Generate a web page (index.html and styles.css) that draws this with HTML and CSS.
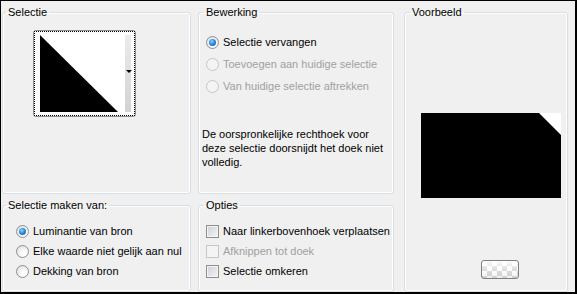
FILE: index.html
```html
<!DOCTYPE html>
<html lang="nl">
<head>
  <meta charset="UTF-8">
  <title>Selectie maken van masker</title>
  <link rel="stylesheet" href="styles.css">
</head>
<body>
  <div class="dialog">
    <fieldset class="group group-selectie">
      <legend>Selectie</legend>
      <div class="thumb">
        <div class="thumb-focus">
          <svg class="thumb-img" width="85" height="77" viewBox="0 0 85 77">
            <rect width="85" height="77" fill="#fff"/>
            <polygon points="0,0 0,77 78,77" fill="#000"/>
          </svg>
          <div class="thumb-strip"><span class="thumb-arrow"></span></div>
        </div>
      </div>
    </fieldset>

    <fieldset class="group group-bewerking">
      <legend>Bewerking</legend>
      <div class="options options-wide">
        <label class="opt"><span class="radio checked"></span>Selectie vervangen</label>
        <label class="opt disabled"><span class="radio"></span>Toevoegen aan huidige selectie</label>
        <label class="opt disabled"><span class="radio"></span>Van huidige selectie aftrekken</label>
      </div>
      <p class="note">De oorspronkelijke rechthoek voor deze selectie doorsnijdt het doek niet volledig.</p>
    </fieldset>

    <fieldset class="group group-voorbeeld">
      <legend>Voorbeeld</legend>
      <svg class="preview" width="140" height="85" viewBox="0 0 140 85">
        <rect width="140" height="85" fill="#000"/>
        <polygon points="118,0 140,0 140,22" fill="#fff"/>
      </svg>
      <button class="checker-btn" type="button" aria-label="Achtergrond"></button>
    </fieldset>

    <fieldset class="group group-bron">
      <legend>Selectie maken van:</legend>
      <div class="options options-tight">
        <label class="opt"><span class="radio checked"></span>Luminantie van bron</label>
        <label class="opt"><span class="radio"></span>Elke waarde niet gelijk aan nul</label>
        <label class="opt"><span class="radio"></span>Dekking van bron</label>
      </div>
    </fieldset>

    <fieldset class="group group-opties">
      <legend>Opties</legend>
      <div class="options options-tight">
        <label class="opt"><span class="check"></span>Naar linkerbovenhoek verplaatsen</label>
        <label class="opt disabled"><span class="check"></span>Afknippen tot doek</label>
        <label class="opt"><span class="check"></span>Selectie omkeren</label>
      </div>
    </fieldset>
  </div>
</body>
</html>
```

FILE: styles.css
```css
body {
  margin: 0;
  background: #f0f0f0;
  font-family: 'Liberation Sans', Arial, sans-serif;
  font-size: 11px;
  color: #000;
}

.dialog {
  width: 577px;
  height: 294px;
  box-sizing: border-box;
  border-style: solid;
  border-color: #000;
  border-width: 1px 2px 2px 1px;
  padding: 4px 0 0 1px;
  background: #f0f0f0;
  display: grid;
  grid-template-columns: 189px 196px 167px;
  grid-template-rows: 189px 94px;
  column-gap: 7px;
  row-gap: 4px;
}

.group {
  margin: 0;
  padding: 0;
  min-width: 0;
  border: 1px solid #d5dfe5;
  border-radius: 3px;
  box-shadow: inset 0 0 0 1px #fff;
}

.group legend {
  padding: 0 2px;
  margin-left: 5px;
  line-height: 14px;
}

.group-selectie legend,
.group-bron legend {
  margin-left: 3px;
}

.group-selectie { grid-column: 1; grid-row: 1; }
.group-bewerking { grid-column: 2; grid-row: 1; }
.group-voorbeeld { grid-column: 3; grid-row: 1 / 3; margin-left: 3px; }
.group-bron { grid-column: 1; grid-row: 2; }
.group-opties { grid-column: 2; grid-row: 2; }

/* selectie thumbnail */
.thumb {
  width: 103px;
  height: 87px;
  box-sizing: border-box;
  margin: 11px 0 0 30px;
  border: 1px solid #8d8d8d;
  border-radius: 3px;
  background: #fcfcfc;
}

.thumb-focus {
  height: 100%;
  box-sizing: border-box;
  border: 1px dotted #000;
  padding: 3px 0 0 5px;
  display: flex;
  align-items: flex-start;
}

.thumb-img {
  display: block;
}

.thumb-strip {
  width: 6px;
  height: 77px;
  background: linear-gradient(to bottom, #ececec, #d2d2d2);
  position: relative;
}

.thumb-arrow {
  position: absolute;
  left: 1px;
  top: 35px;
  width: 0;
  height: 0;
  border-left: 3px solid transparent;
  border-right: 3px solid transparent;
  border-top: 3px solid #000;
}

/* radio / check rows */
.options {
  display: flex;
  flex-direction: column;
}

.options-wide {
  margin: 12px 0 0 7px;
}

.options-wide .opt {
  height: 22px;
}

.options-tight {
  margin: 9px 0 0 7px;
}

.group-bron .options-tight {
  margin-left: 13px;
}

.options-tight .opt {
  height: 20px;
}

.opt {
  display: flex;
  align-items: center;
  gap: 4px;
  white-space: nowrap;
}

.opt.disabled {
  color: #a0a0a0;
}

.radio {
  width: 13px;
  height: 13px;
  box-sizing: border-box;
  border-radius: 50%;
  border: 1px solid #8e8f8f;
  background: radial-gradient(circle at 65% 70%, #fff 20%, #dcdcdc 90%);
  position: relative;
  flex: none;
}

.radio.checked::after {
  content: "";
  position: absolute;
  left: 2px;
  top: 2px;
  width: 7px;
  height: 7px;
  border-radius: 50%;
  background: radial-gradient(circle at 40% 35%, #8fd3ff 0, #2d8be0 45%, #0b4fa3 100%);
}

.disabled .radio {
  border-color: #c6c6c6;
  background: #f4f4f4;
}

.check {
  width: 13px;
  height: 13px;
  box-sizing: border-box;
  border: 1px solid #8e8f8f;
  background: linear-gradient(135deg, #cbcfd5, #f6f6f6);
  box-shadow: inset 0 0 0 1px #f4f4f4;
  flex: none;
}

.disabled .check {
  border-color: #c6c6c6;
  background: #f4f4f4;
  box-shadow: none;
}

.note {
  width: 188px;
  margin: 30px 0 0 3px;
  line-height: 14px;
}

/* voorbeeld */
.preview {
  display: block;
  margin: 94px 0 0 16px;
}

.checker-btn {
  display: block;
  width: 38px;
  height: 19px;
  margin: 62px 0 0 76px;
  padding: 0;
  border: 1px solid #7f7f7f;
  border-radius: 3px;
  background:
    linear-gradient(to bottom, rgba(255, 255, 255, 0.9), rgba(255, 255, 255, 0.2) 55%, rgba(200, 200, 200, 0.3)),
    conic-gradient(#d2d2d2 25%, #fff 0 50%, #d2d2d2 0 75%, #fff 0) 0 0 / 10px 10px;
}
```
